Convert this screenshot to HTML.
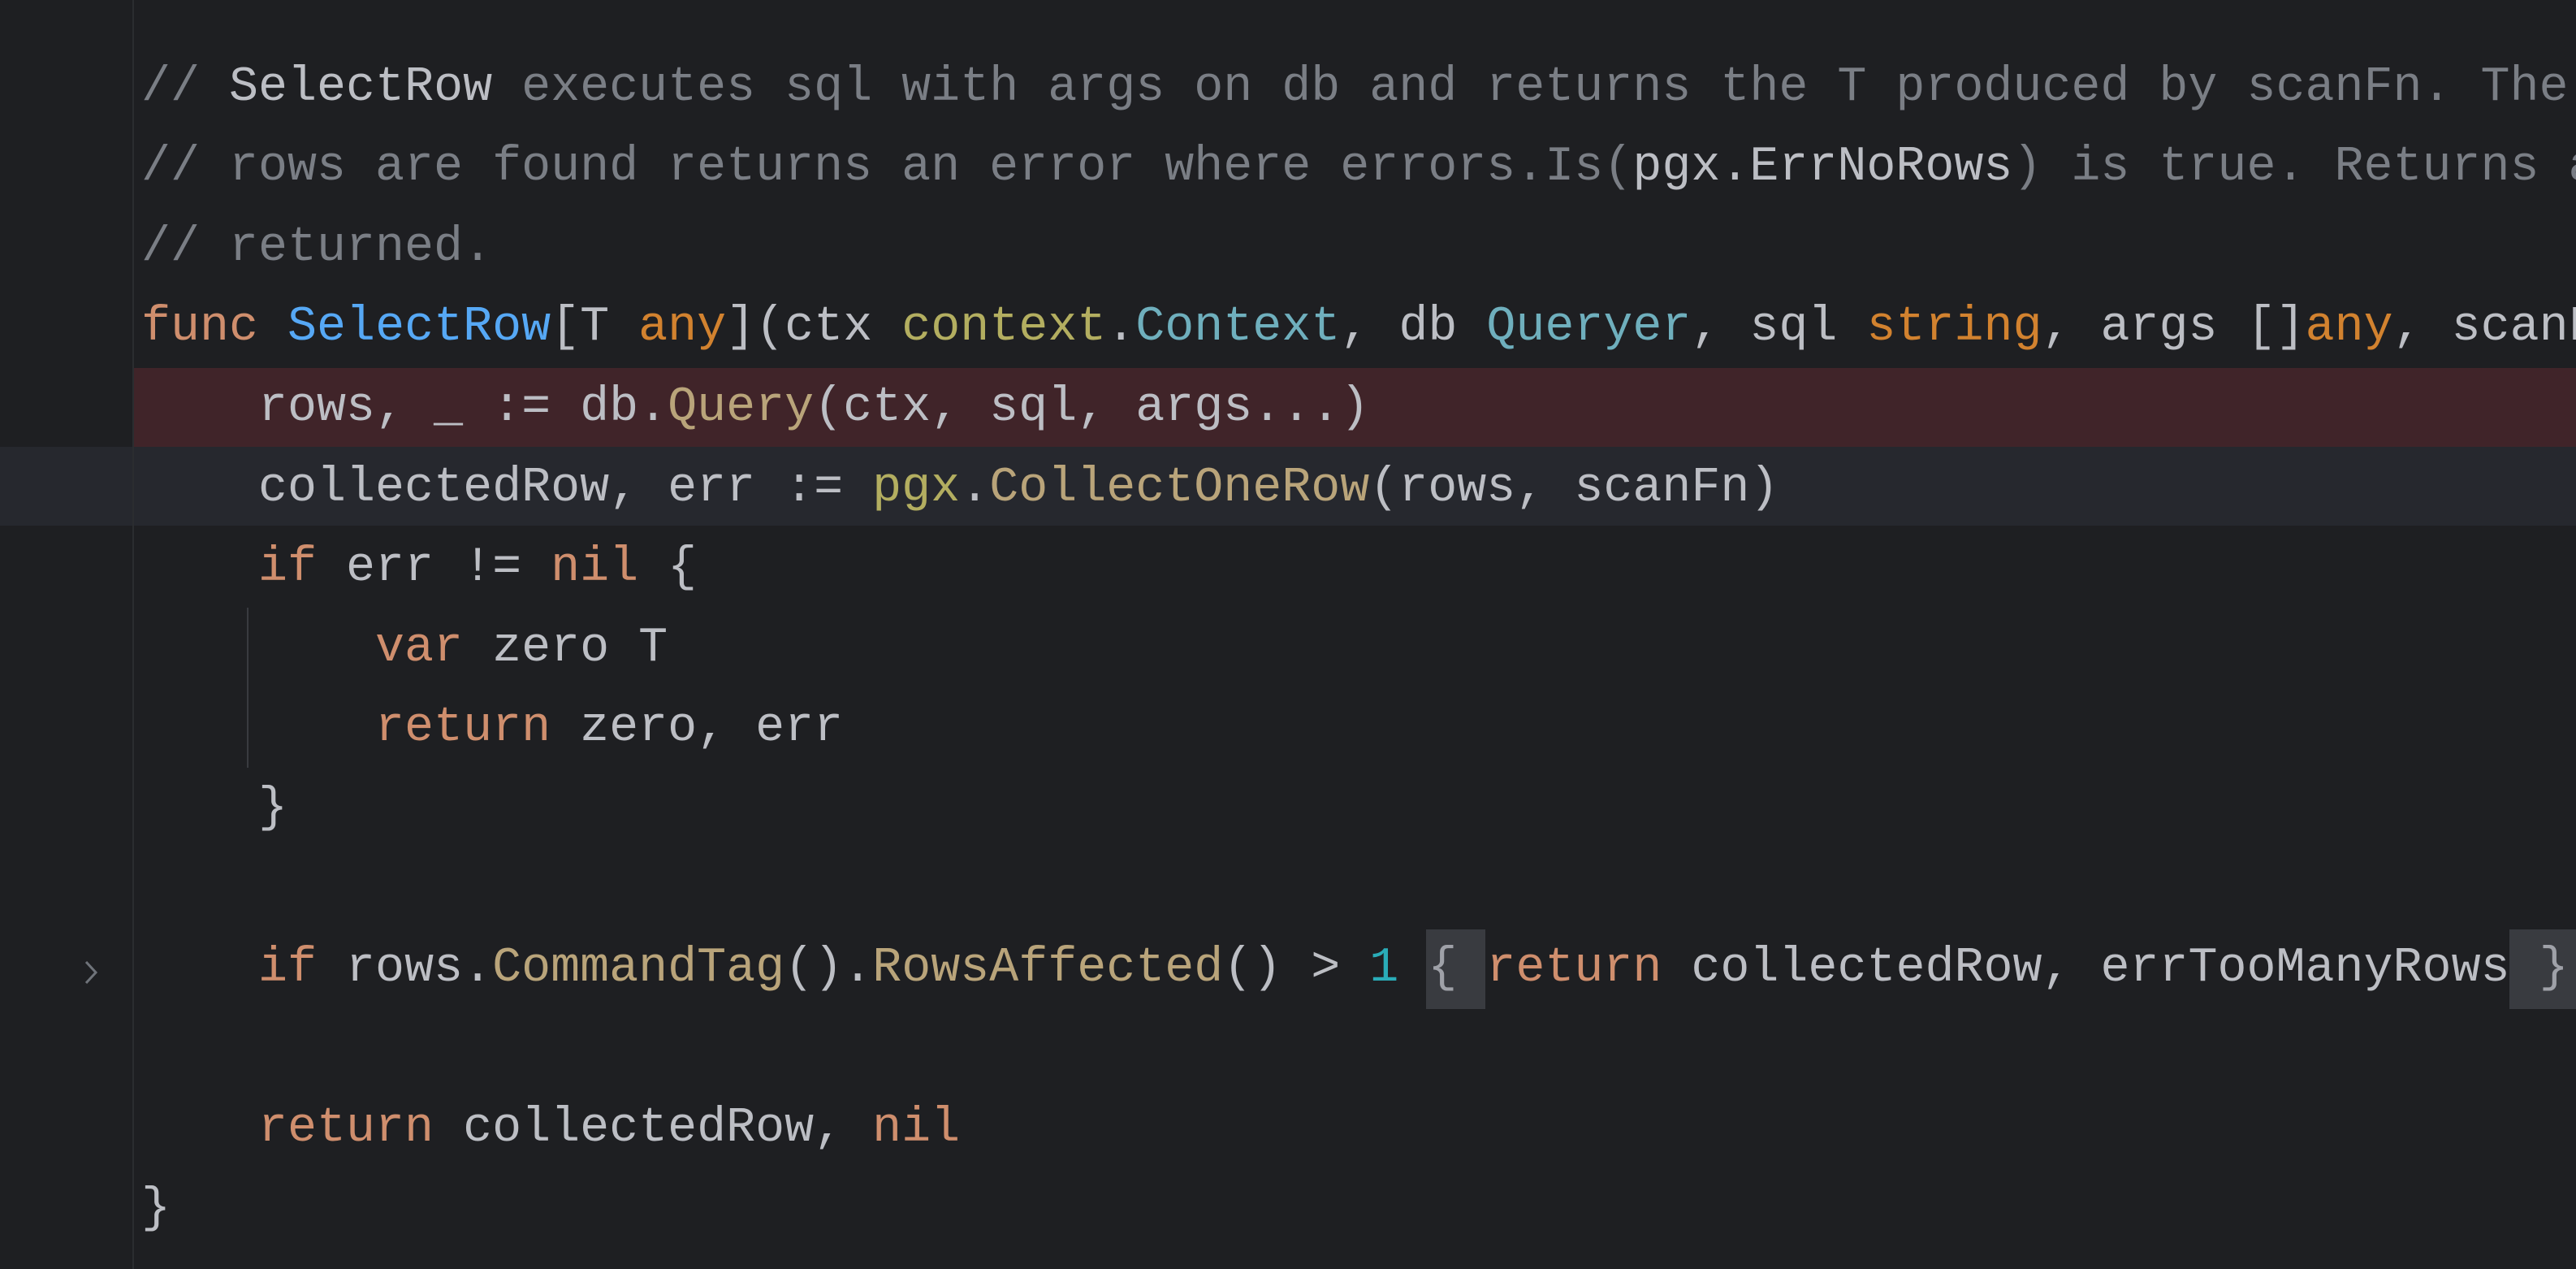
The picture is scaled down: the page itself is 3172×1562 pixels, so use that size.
<!DOCTYPE html>
<html><head><meta charset="utf-8"><style>
html,body{margin:0;padding:0;}
body{width:3172px;height:1562px;background:#1e1f22;overflow:hidden;position:relative;font-family:"Liberation Mono",monospace;font-size:60px;color:#bcbec4;}
.l{position:absolute;left:174px;height:98.6px;line-height:98.6px;white-space:pre;width:2998px;overflow:hidden;}
.c{color:#7a7e85}.cr{color:#bcbec4}
.k{color:#cf8e6d}.f{color:#56a8f5}.t{color:#d2822f}.p{color:#b3ae60}.ty{color:#6fafbd}.m{color:#b9a47a}.n{color:#2aacb8}.b{color:#9fa1a8}
.hl{position:absolute;background:#393b40;}
</style></head><body>
<div style="position:absolute;left:165px;top:453px;width:3007px;height:97px;background:#402429"></div>
<div style="position:absolute;left:0;top:550px;width:3172px;height:97px;background:#26282e"></div>
<div style="position:absolute;left:163px;top:0;width:2px;height:1562px;background:#2b2d30"></div>
<div style="position:absolute;left:304px;top:748px;width:2px;height:197px;background:#393b40"></div>
<div class="hl" style="left:1756px;top:1144px;width:73px;height:98px"></div>
<div class="hl" style="left:3090px;top:1144px;width:82px;height:98px"></div>
<svg style="position:absolute;left:100px;top:1180px" width="24" height="34" viewBox="0 0 24 34"><path d="M6 4 L18 17 L6 30" fill="none" stroke="#6f737a" stroke-width="3"/></svg>
<div class="l c" style="top:58.6px">// <span class="cr">SelectRow</span> executes sql with args on db and returns the T produced by scanFn. The first row</div>
<div class="l c" style="top:157.2px">// rows are found returns an error where errors.Is(<span class="cr">pgx.ErrNoRows</span>) is true. Returns an error</div>
<div class="l c" style="top:255.8px">// returned.</div>
<div class="l" style="top:354.4px"><span class="k">func</span> <span class="f">SelectRow</span>[T <span class="t">any</span>](ctx <span class="p">context</span>.<span class="ty">Context</span>, db <span class="ty">Queryer</span>, sql <span class="t">string</span>, args []<span class="t">any</span>, scanFn</div>
<div class="l" style="top:453px">    rows, _ := db.<span class="m">Query</span>(ctx, sql, args...)</div>
<div class="l" style="top:551.6px">    collectedRow, err := <span class="p">pgx</span>.<span class="m">CollectOneRow</span>(rows, scanFn)</div>
<div class="l" style="top:650.2px">    <span class="k">if</span> err != <span class="k">nil</span> {</div>
<div class="l" style="top:748.8px">        <span class="k">var</span> zero T</div>
<div class="l" style="top:847.4px">        <span class="k">return</span> zero, err</div>
<div class="l" style="top:946px">    }</div>
<div class="l" style="top:1143.2px">    <span class="k">if</span> rows.<span class="m">CommandTag</span>().<span class="m">RowsAffected</span>() &gt; <span class="n">1</span> <span class="b">{</span> <span class="k">return</span> collectedRow, errTooManyRows <span class="b">}</span></div>
<div class="l" style="top:1340.4px">    <span class="k">return</span> collectedRow, <span class="k">nil</span></div>
<div class="l" style="top:1439px">}</div>
</body></html>
